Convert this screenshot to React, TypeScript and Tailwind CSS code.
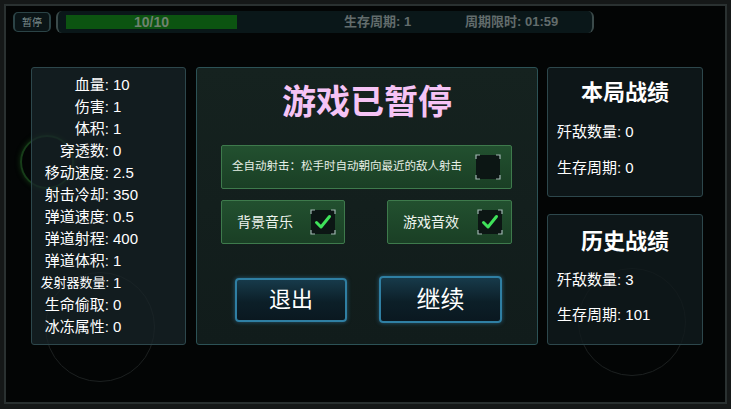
import React from "react";

function CheckBox({ checked }: { checked: boolean }) {
  return (
    <svg width="26" height="26" viewBox="0 0 26 26" className="shrink-0">
      <rect x="1" y="1" width="24" height="24" rx="2" fill="#0c1614" />
      <g stroke="#9fb3b0" strokeWidth="1.2" fill="none">
        <path d="M1 5 V1 H5" />
        <path d="M21 1 H25 V5" />
        <path d="M1 21 V25 H5" />
        <path d="M21 25 H25 V21" />
      </g>
      {checked && (
        <path d="M6.5 13.5 L11 18 L19.5 7.5" stroke="#3fe25a" strokeWidth="3" fill="none" strokeLinecap="round" strokeLinejoin="round" />
      )}
    </svg>
  );
}

const stats: [string, string, boolean?][] = [
  ["血量:", "10"],
  ["伤害:", "1"],
  ["体积:", "1"],
  ["穿透数:", "0"],
  ["移动速度:", "2.5"],
  ["射击冷却:", "350"],
  ["弹道速度:", "0.5"],
  ["弹道射程:", "400"],
  ["弹道体积:", "1"],
  ["发射器数量:", "1", true],
  ["生命偷取:", "0"],
  ["冰冻属性:", "0"],
];

export default function App() {
  return (
    <div className="relative w-[731px] h-[409px] overflow-hidden bg-[#151818] px-[4px] pt-[4px] pb-[5px] font-['Liberation_Sans','Noto_Sans_CJK_SC',sans-serif]">
      <div className="relative h-full border-2 border-[#2a3131] bg-[#030505] flex flex-col">
        {/* decorative background rings */}
        <div className="absolute left-[14px] top-[129px] w-[54px] h-[54px] rounded-full border-2 border-[#173d19] shadow-[0_0_5px_#123412]" />
        <div className="absolute left-[39px] top-[266px] w-[110px] h-[110px] rounded-full border border-[#1c2020]" />
        <div className="absolute left-[572px] top-[262px] w-[108px] h-[108px] rounded-full border border-[#1c2020]" />

        {/* top bar */}
        <div className="relative flex items-center h-[26px] mt-[3px] pl-[7px]">
          <div className="w-[38px] h-[20px] flex items-center justify-center rounded-[5px] border-x-2 border-y border-[#2b4346] bg-[#0a1416] text-[10px] text-[#7f9090]">
            暂停
          </div>
          <div className="ml-[5px] w-[538px] h-[22px] flex items-center rounded-[6px] border-x-2 border-[#3b4a4a] bg-[#0a1719] pl-[8px] text-[13px] font-bold text-[#626c6c]">
            <div className="w-[171px] h-[14px] bg-[#0c5411] flex items-center justify-center text-[14px] text-[#6f826f]">10/10</div>
            <span className="ml-[107px] w-[121px]">生存周期: 1</span>
            <span>周期限时: 01:59</span>
          </div>
        </div>

        {/* main row */}
        <div className="relative flex mt-[32px] pl-[25px] text-white">
          {/* left stats */}
          <div className="w-[155px] h-[278px] rounded-[3px] border border-[#2d474c] bg-[rgba(24,36,40,0.75)] pt-[6px]">
            {stats.map(([k, v, small]) => (
              <div key={k} className="flex items-center h-[22px]">
                <span className={"w-[77px] text-right whitespace-nowrap " + (small ? "text-[13px]" : "text-[15px]")}>{k}</span>
                <span className="ml-[4px] text-[15px]">{v}</span>
              </div>
            ))}
          </div>

          {/* center panel */}
          <div className="ml-[10px] w-[342px] h-[278px] rounded-[3px] border border-[#2c5256] bg-[linear-gradient(180deg,#15221f_0%,#111c1b_100%)] flex flex-col">
            <div className="mt-[14px] h-[40px] leading-[40px] text-center text-[34px] font-bold text-[#f5c3f5]">游戏已暂停</div>
            <div className="mt-[23px] ml-[24px] w-[291px] h-[44px] rounded-[2px] border border-[#3e7a4c] bg-[linear-gradient(180deg,#22502f_0%,#1a3f25_100%)] flex items-center pl-[10px] pr-[10px]">
              <span className="text-[11.5px] text-[#e6efe6] whitespace-nowrap">全自动射击：松手时自动朝向最近的敌人射击</span>
              <span className="ml-auto"><CheckBox checked={false} /></span>
            </div>
            <div className="mt-[11px] ml-[24px] w-[291px] flex justify-between">
              <div className="w-[124px] h-[44px] rounded-[2px] border border-[#3e7a4c] bg-[linear-gradient(180deg,#22502f_0%,#1a3f25_100%)] flex items-center pl-[15px] pr-[8px]">
                <span className="text-[14px] text-[#eef4ee]">背景音乐</span>
                <span className="ml-auto"><CheckBox checked={true} /></span>
              </div>
              <div className="w-[125px] h-[44px] rounded-[2px] border border-[#3e7a4c] bg-[linear-gradient(180deg,#22502f_0%,#1a3f25_100%)] flex items-center pl-[15px] pr-[8px]">
                <span className="text-[14px] text-[#eef4ee]">游戏音效</span>
                <span className="ml-auto"><CheckBox checked={true} /></span>
              </div>
            </div>
            <div className="mt-[32px] ml-[38px] flex items-center">
              <div className="w-[112px] h-[44px] rounded-[4px] border-2 border-[#2f7fa3] bg-[linear-gradient(180deg,#173a4a_0%,#0c1f28_55%,#0a1820_100%)] shadow-[0_0_4px_rgba(60,150,200,0.5)] flex items-center justify-center text-[22px] text-white">退出</div>
              <div className="ml-[32px] w-[123px] h-[47px] rounded-[4px] border-2 border-[#2f7fa3] bg-[linear-gradient(180deg,#173a4a_0%,#0c1f28_55%,#0a1820_100%)] shadow-[0_0_4px_rgba(60,150,200,0.5)] flex items-center justify-center text-[24px] text-white">继续</div>
            </div>
          </div>

          {/* right panels */}
          <div className="ml-[9px] w-[156px] flex flex-col">
            <div className="h-[130px] rounded-[3px] border border-[#2d474c] bg-[rgba(16,26,29,0.8)] pt-[10px] pl-[9px]">
              <div className="h-[30px] leading-[30px] text-center pr-[9px] text-[22px] font-bold">本局战绩</div>
              <div className="mt-[13px] h-[22px] leading-[22px] text-[15px]">歼敌数量: 0</div>
              <div className="mt-[14px] h-[22px] leading-[22px] text-[15px]">生存周期: 0</div>
            </div>
            <div className="mt-[17px] h-[131px] rounded-[3px] border border-[#2d474c] bg-[rgba(16,26,29,0.8)] pt-[12px] pl-[9px]">
              <div className="h-[30px] leading-[30px] text-center pr-[9px] text-[22px] font-bold">历史战绩</div>
              <div className="mt-[12px] h-[22px] leading-[22px] text-[15px]">歼敌数量: 3</div>
              <div className="mt-[13px] h-[22px] leading-[22px] text-[15px]">生存周期: 101</div>
            </div>
          </div>
        </div>
      </div>
    </div>
  );
}
